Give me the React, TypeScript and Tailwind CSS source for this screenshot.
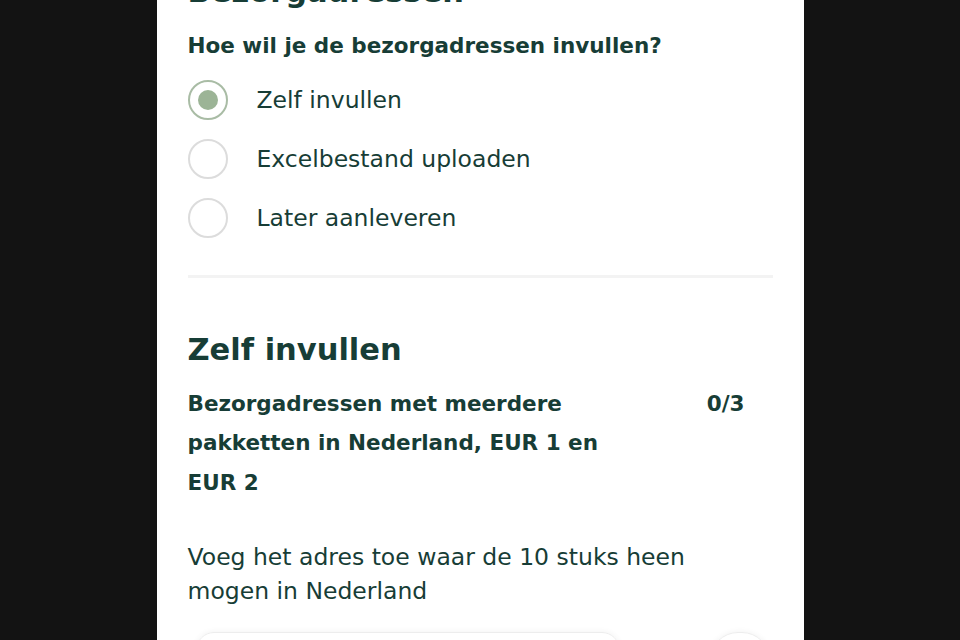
import React from "react";

const FONT = { fontFamily: '"DejaVu Sans", "Noto Sans", sans-serif' };

function Radio({ label, checked }: { label: string; checked?: boolean }) {
  return (
    <div className="flex items-center">
      <div
        className={
          checked
            ? "w-[40px] h-[40px] rounded-full border-2 border-[#a9bca5] flex items-center justify-center shrink-0"
            : "w-[40px] h-[40px] rounded-full border-2 border-[#dcdcdc] shrink-0"
        }
      >
        {checked && <div className="w-[20px] h-[20px] rounded-full bg-[#9cb496]" />}
      </div>
      <span className="ml-[29px] text-[23.5px] leading-[34px] text-[#173d36]">{label}</span>
    </div>
  );
}

export default function App() {
  return (
    <div className="w-[960px] h-[640px] bg-[#131313] flex justify-center overflow-hidden" style={FONT}>
      <div className="w-[647px] h-full bg-white px-[31px] overflow-hidden text-[#173d36]">
        <h2 className="mt-[-28px] text-[30.5px] leading-[40px] font-bold">Bezorgadressen</h2>
        <p className="mt-[18px] text-[21.5px] leading-[32px] font-bold">Hoe wil je de bezorgadressen invullen?</p>
        <div className="mt-[18px] flex flex-col gap-[19px]">
          <Radio label="Zelf invullen" checked />
          <Radio label="Excelbestand uploaden" />
          <Radio label="Later aanleveren" />
        </div>
        <div className="mt-[37px] h-[3px] bg-[#f3f3f3]" />
        <h2 className="mt-[51.5px] text-[30.5px] leading-[40px] font-bold">Zelf invullen</h2>
        <div className="mt-[14px] flex justify-between items-start">
          <p className="w-[430px] text-[21.5px] leading-[39.5px] font-bold">
            Bezorgadressen met meerdere pakketten in Nederland, EUR 1 en EUR 2
          </p>
          <span className="mr-[28px] text-[21.5px] leading-[39.5px] font-bold">0/3</span>
        </div>
        <p className="mt-[38px] max-w-[560px] text-[23.5px] leading-[34px]">
          Voeg het adres toe waar de 10 stuks heen mogen in Nederland
        </p>
        <div className="mt-[24px] flex items-start">
          <div className="ml-[8px] w-[424px] h-[56px] rounded-[18px] border border-[#ededed] shadow-[0_0_6px_rgba(0,0,0,0.06)]" />
          <div className="ml-[90px] w-[60px] h-[56px] rounded-full border border-[#ededed] shadow-[0_0_6px_rgba(0,0,0,0.06)]" />
        </div>
      </div>
    </div>
  );
}
